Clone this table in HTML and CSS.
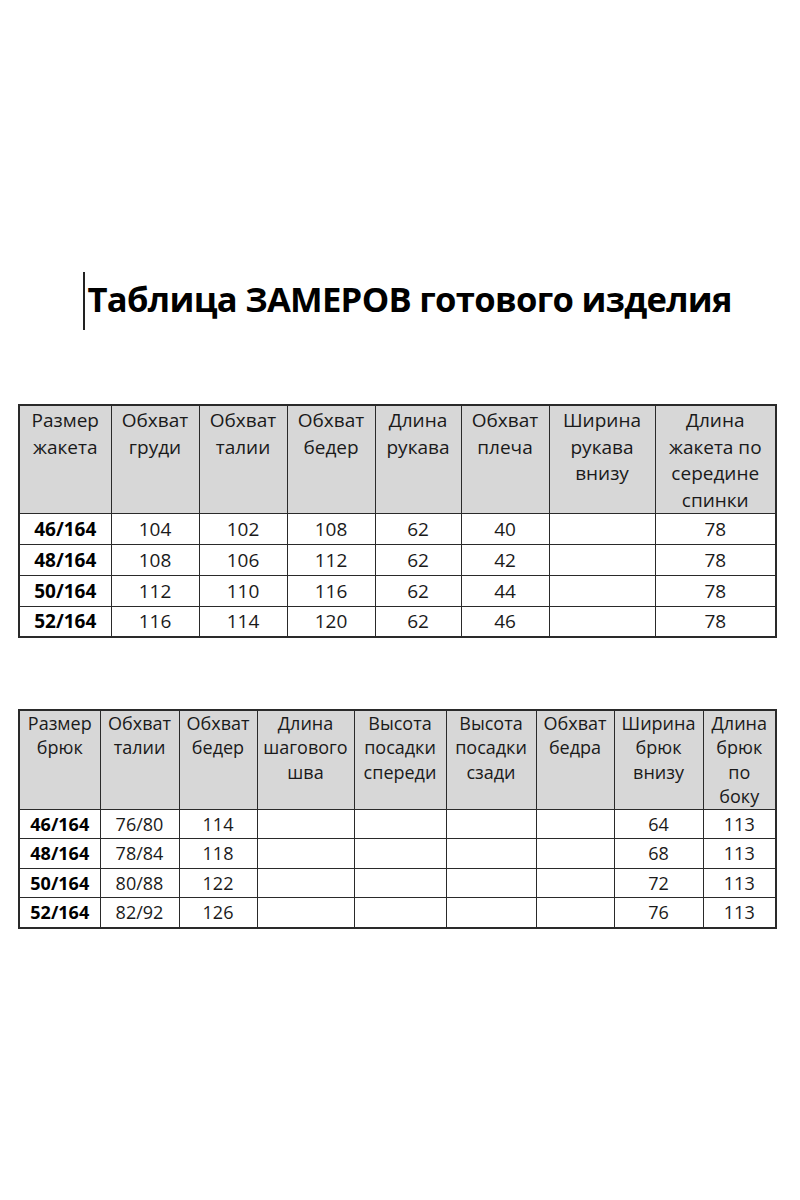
FILE: index.html
```html
<!DOCTYPE html>
<html lang="ru">
<head>
<meta charset="utf-8">
<title>Таблица замеров</title>
<link rel="stylesheet" href="styles.css">
</head>
<body>
<div class="page">
  <div class="title-row">
    <span class="caret"></span>
    <h1 class="title">Таблица ЗАМЕРОВ готового изделия</h1>
  </div>

  <table class="grid grid-jacket">
    <colgroup>
      <col class="w92"><col class="w88"><col class="w88"><col class="w88"><col class="w86"><col class="w88"><col class="w106"><col class="w121">
    </colgroup>
    <thead>
      <tr>
        <th>Размер<br>жакета</th>
        <th>Обхват<br>груди</th>
        <th>Обхват<br>талии</th>
        <th>Обхват<br>бедер</th>
        <th>Длина<br>рукава</th>
        <th>Обхват<br>плеча</th>
        <th>Ширина<br>рукава<br>внизу</th>
        <th>Длина<br>жакета по<br>середине<br>спинки</th>
      </tr>
    </thead>
    <tbody>
      <tr><td class="size">46/164</td><td>104</td><td>102</td><td>108</td><td>62</td><td>40</td><td></td><td>78</td></tr>
      <tr><td class="size">48/164</td><td>108</td><td>106</td><td>112</td><td>62</td><td>42</td><td></td><td>78</td></tr>
      <tr><td class="size">50/164</td><td>112</td><td>110</td><td>116</td><td>62</td><td>44</td><td></td><td>78</td></tr>
      <tr><td class="size">52/164</td><td>116</td><td>114</td><td>120</td><td>62</td><td>46</td><td></td><td>78</td></tr>
    </tbody>
  </table>

  <table class="grid grid-pants">
    <colgroup>
      <col class="w81"><col class="w79"><col class="w78"><col class="w97"><col class="w92"><col class="w90"><col class="w78"><col class="w89"><col class="w73">
    </colgroup>
    <thead>
      <tr>
        <th>Размер<br>брюк</th>
        <th>Обхват<br>талии</th>
        <th>Обхват<br>бедер</th>
        <th>Длина<br>шагового<br>шва</th>
        <th>Высота<br>посадки<br>спереди</th>
        <th>Высота<br>посадки<br>сзади</th>
        <th>Обхват<br>бедра</th>
        <th>Ширина<br>брюк<br>внизу</th>
        <th>Длина<br>брюк<br>по<br>боку</th>
      </tr>
    </thead>
    <tbody>
      <tr><td class="size">46/164</td><td>76/80</td><td>114</td><td></td><td></td><td></td><td></td><td>64</td><td>113</td></tr>
      <tr><td class="size">48/164</td><td>78/84</td><td>118</td><td></td><td></td><td></td><td></td><td>68</td><td>113</td></tr>
      <tr><td class="size">50/164</td><td>80/88</td><td>122</td><td></td><td></td><td></td><td></td><td>72</td><td>113</td></tr>
      <tr><td class="size">52/164</td><td>82/92</td><td>126</td><td></td><td></td><td></td><td></td><td>76</td><td>113</td></tr>
    </tbody>
  </table>
</div>
</body>
</html>
```

FILE: styles.css
```css
html, body {
  margin: 0;
  padding: 0;
  background: #ffffff;
}

.page {
  width: 800px;
  height: 1200px;
  padding-top: 272px;
  box-sizing: border-box;
  font-family: "Open Sans", "Noto Sans", sans-serif;
  color: #111;
}

.title-row {
  display: flex;
  align-items: flex-start;
  padding-left: 83px;
  height: 132px;
}

.caret {
  display: block;
  width: 1.5px;
  height: 58px;
  background: #222;
  flex: none;
}

.title {
  margin: 0;
  padding-left: 3px;
  padding-top: 5px;
  font-size: 34.6px;
  font-weight: 700;
  line-height: 44px;
  letter-spacing: -0.7px;
  color: #000;
  white-space: nowrap;
}

.grid {
  margin-left: 18px;
  width: 757px;
  table-layout: fixed;
  border-collapse: collapse;
  border: 2px solid #2a2a2a;
}

.grid th,
.grid td {
  border: 1px solid #2a2a2a;
  padding: 0;
  text-align: center;
  overflow: hidden;
  white-space: nowrap;
}

.grid th {
  background: #d7d7d7;
  font-weight: 400;
  vertical-align: top;
  color: #1a1a1a;
}

.grid td {
  vertical-align: middle;
  color: #1a1a1a;
}

.grid td.size {
  font-weight: 700;
  color: #000;
}

.grid-jacket {
  font-size: 19px;
}

.grid-jacket th {
  height: 105px;
  line-height: 26.5px;
  padding-top: 1px;
}

.grid-jacket td {
  height: 30px;
  line-height: 30px;
}

.grid-jacket tbody tr:last-child td {
  height: 29px;
  line-height: 29px;
}

.grid-pants {
  margin-top: 71px;
  font-size: 18px;
}

.grid-pants th {
  height: 97px;
  line-height: 24.4px;
  padding-top: 0;
}

.grid-pants td {
  height: 28.5px;
  line-height: 28.5px;
}

.w73 { width: 73px; }
.w78 { width: 78px; }
.w79 { width: 79px; }
.w81 { width: 81px; }
.w86 { width: 86px; }
.w88 { width: 88px; }
.w89 { width: 89px; }
.w90 { width: 90px; }
.w92 { width: 92px; }
.w97 { width: 97px; }
.w106 { width: 106px; }
.w121 { width: 121px; }
```
